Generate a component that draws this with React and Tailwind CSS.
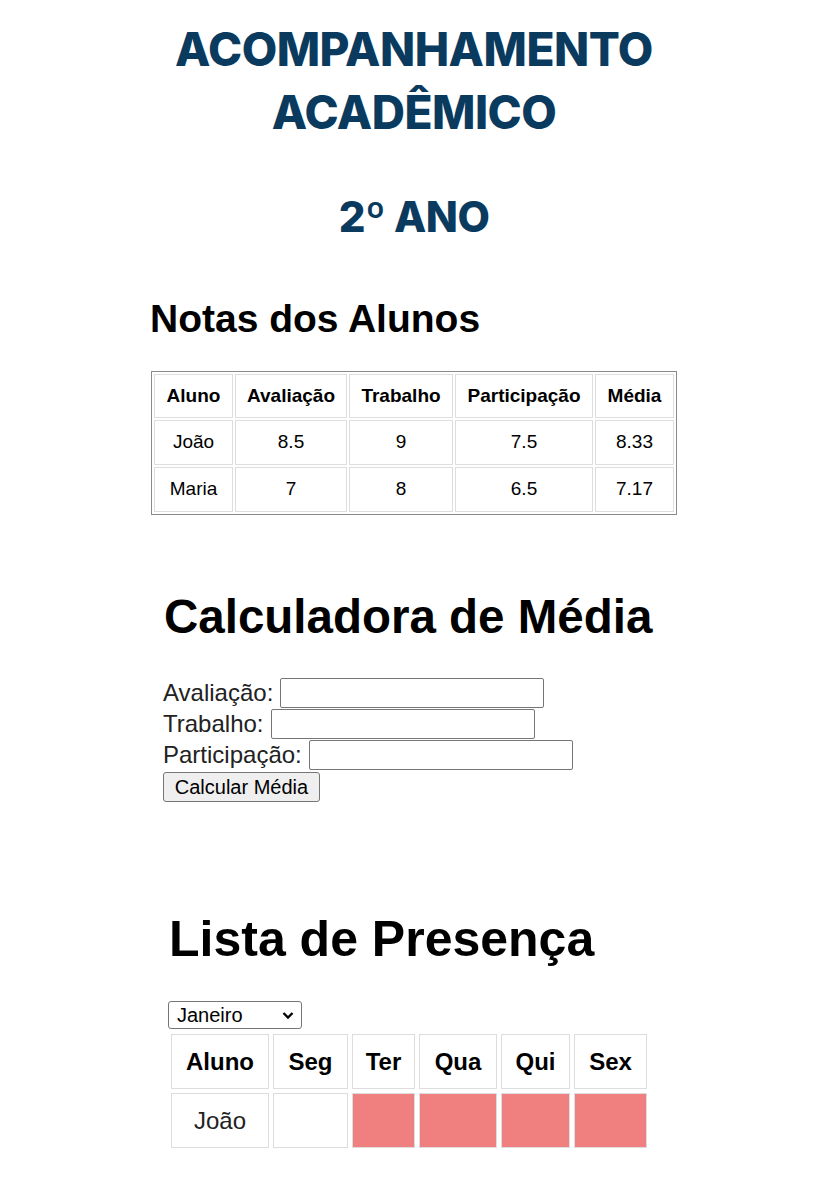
import React, { useState } from 'react';

// Dados das notas
const notas = [
    { aluno: 'João', avaliacao: '8.5', trabalho: '9', participacao: '7.5', media: '8.33' },
    { aluno: 'Maria', avaliacao: '7', trabalho: '8', participacao: '6.5', media: '7.17' },
];

const dias = ['Seg', 'Ter', 'Qua', 'Qui', 'Sex'];
const larguras = ['w-[75px]', 'w-[63px]', 'w-[78px]', 'w-[69px]', 'w-[73px]'];
// Presença de João: true = presente, false = falta
const presencaJoao = [true, false, false, false, false];

function App() {
    const [mes, setMes] = useState('Janeiro');

    return (
        <div className="min-h-[1183px] w-[828px] bg-white text-black font-['Liberation_Sans',Arial,sans-serif]">
            {/* Cabeçalho */}
            <div className="pt-[18px] text-center font-['Inter',sans-serif] font-extrabold text-[#0a3b5f] text-[46px] leading-[63px] tracking-[-0.5px]">
                ACOMPANHAMENTO
                <br />
                ACADÊMICO
            </div>
            <div className="mt-[50px] text-center font-['Inter',sans-serif] font-extrabold text-[#0a3b5f] text-[42px] leading-[45px] tracking-[-0.5px]">
                2º ANO
            </div>

            {/* Notas dos Alunos */}
            <h2 className="mt-[61px] ml-[150px] text-[39px] leading-[38px] font-bold">Notas dos Alunos</h2>
            <table className="mt-[33px] ml-[151px] w-[526px] table-fixed border-separate border-spacing-[2px] border border-[#8a8a8a] text-[19px] text-center">
                <thead>
                    <tr className="h-[44px]">
                        <th className="w-[79px] border border-[#dedede] font-bold">Aluno</th>
                        <th className="w-[112px] border border-[#dedede] font-bold">Avaliação</th>
                        <th className="w-[104px] border border-[#dedede] font-bold">Trabalho</th>
                        <th className="w-[138px] border border-[#dedede] font-bold">Participação</th>
                        <th className="w-[79px] border border-[#dedede] font-bold">Média</th>
                    </tr>
                </thead>
                <tbody>
                    {notas.map((n) => (
                        <tr key={n.aluno} className="h-[45px]">
                            <td className="border border-[#dedede]">{n.aluno}</td>
                            <td className="border border-[#dedede]">{n.avaliacao}</td>
                            <td className="border border-[#dedede]">{n.trabalho}</td>
                            <td className="border border-[#dedede]">{n.participacao}</td>
                            <td className="border border-[#dedede]">{n.media}</td>
                        </tr>
                    ))}
                </tbody>
            </table>

            {/* Calculadora de Média */}
            <h2 className="mt-[78px] ml-[164px] text-[47.5px] leading-[47px] font-bold">Calculadora de Média</h2>
            <div className="mt-[37px] ml-[163px] text-[24px] text-[#222]">
                <div className="flex items-center gap-[7px] h-[31px]">
                    <span>Avaliação:</span>
                    <input className="h-[30px] w-[264px] border border-[#767676] rounded-[2px] bg-white" />
                </div>
                <div className="flex items-center gap-[7px] h-[31px]">
                    <span>Trabalho:</span>
                    <input className="h-[30px] w-[264px] border border-[#767676] rounded-[2px] bg-white" />
                </div>
                <div className="flex items-center gap-[7px] h-[31px]">
                    <span>Participação:</span>
                    <input className="h-[30px] w-[264px] border border-[#767676] rounded-[2px] bg-white" />
                </div>
                <button className="block mt-[2px] h-[30px] w-[157px] border border-[#767676] rounded-[3px] bg-[#efefef] text-[20px] leading-[28px] text-black">
                    Calcular Média
                </button>
            </div>

            {/* Lista de Presença */}
            <h2 className="mt-[112px] ml-[169px] text-[50px] leading-[50px] font-bold">Lista de Presença</h2>
            <div className="mt-[37px] ml-[168px] relative w-[134px] h-[28px]">
                <select
                    value={mes}
                    onChange={(e) => setMes(e.target.value)}
                    className="block appearance-none w-full h-full border border-[#767676] rounded-[3px] bg-white pl-[8px] text-[20px] leading-[26px]"
                >
                    <option>Janeiro</option>
                    <option>Fevereiro</option>
                    <option>Março</option>
                </select>
                <svg className="absolute right-[8px] top-[10px] pointer-events-none" width="12" height="9" viewBox="0 0 12 9">
                    <path d="M1.5 2 L6 6.5 L10.5 2" fill="none" stroke="#000" strokeWidth="2.4" />
                </svg>
            </div>
            <table className="mt-[1px] ml-[167px] table-fixed border-separate border-spacing-[4px] text-[24px] text-center">
                <thead>
                    <tr className="h-[55px]">
                        <th className="w-[98px] border border-[#dddddd] font-bold">Aluno</th>
                        {dias.map((d, i) => (
                            <th key={d} className={`${larguras[i]} border border-[#dddddd] font-bold`}>{d}</th>
                        ))}
                    </tr>
                </thead>
                <tbody>
                    <tr className="h-[55px]">
                        <td className="border border-[#dddddd] text-[#222]">João</td>
                        {presencaJoao.map((p, i) =>
                            p ? (
                                <td key={i} className="border border-[#dddddd]"></td>
                            ) : (
                                <td key={i} className="border border-[#dddddd] bg-[#f08080]"></td>
                            )
                        )}
                    </tr>
                </tbody>
            </table>
        </div>
    );
}

export default App;
